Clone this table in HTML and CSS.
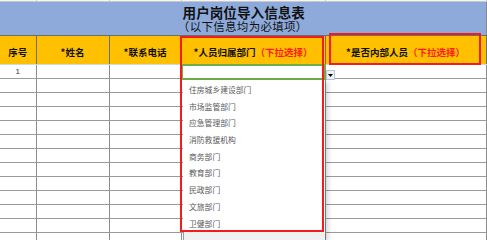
FILE: index.html
```html
<!DOCTYPE html>
<html lang="zh">
<head>
<meta charset="utf-8">
<link rel="stylesheet" href="styles.css">
</head>
<body>
<div class="sheet">
  <table class="grid">
    <colgroup><col class="c1"><col class="c2"><col class="c3"><col class="c4"><col class="c5"></colgroup>
    <tr class="strip"><td></td><td></td><td></td><td></td><td></td></tr>
    <tr class="title"><td colspan="5"><div class="t1">用户岗位导入信息表</div><div class="t2">（以下信息均为必填项）</div></td></tr>
    <tr class="head">
      <th>序号</th>
      <th>*姓名</th>
      <th>*联系电话</th>
      <th>*人员归属部门<span class="hint">（下拉选择）</span></th>
      <th>*是否内部人员<span class="hint">（下拉选择）</span></th>
    </tr>
    <tr class="row first"><td class="num">1</td><td></td><td></td><td></td><td></td></tr>
    <tr class="row"><td></td><td></td><td></td><td></td><td></td></tr>
    <tr class="row"><td></td><td></td><td></td><td></td><td></td></tr>
    <tr class="row"><td></td><td></td><td></td><td></td><td></td></tr>
    <tr class="row"><td></td><td></td><td></td><td></td><td></td></tr>
    <tr class="row"><td></td><td></td><td></td><td></td><td></td></tr>
    <tr class="row"><td></td><td></td><td></td><td></td><td></td></tr>
    <tr class="row"><td></td><td></td><td></td><td></td><td></td></tr>
    <tr class="row"><td></td><td></td><td></td><td></td><td></td></tr>
    <tr class="row"><td></td><td></td><td></td><td></td><td></td></tr>
    <tr class="row"><td></td><td></td><td></td><td></td><td></td></tr>
    <tr class="row"><td></td><td></td><td></td><td></td><td></td></tr>
    <tr class="row"><td></td><td></td><td></td><td></td><td></td></tr>
  </table>

  <div class="selected"></div>
  <div class="drop-btn"><svg width="5" height="3" viewBox="0 0 5 3"><path d="M0 0H5L2.5 3Z" fill="#000"/></svg></div>

  <div class="dropdown">
    <ul class="options">
      <li>住房城乡建设部门</li>
      <li>市场监管部门</li>
      <li>应急管理部门</li>
      <li>消防救援机构</li>
      <li>商务部门</li>
      <li>教育部门</li>
      <li>民政部门</li>
      <li>文旅部门</li>
      <li>卫健部门</li>
    </ul>
    <div class="drop-foot"></div>
  </div>

  <div class="mark mark-dept"></div>
  <div class="mark mark-inner"></div>
</div>
</body>
</html>
```

FILE: styles.css
```css
html, body {
  margin: 0;
  padding: 0;
  background: #ffffff;
}

.sheet {
  position: relative;
  width: 487px;
  height: 240px;
  overflow: hidden;
  font-family: "Noto Sans CJK SC", "Noto Sans", sans-serif;
}

.grid {
  border-collapse: collapse;
  table-layout: fixed;
  width: 486px;
}

.c1 { width: 36px; }
.c2 { width: 73px; }
.c3 { width: 72px; }
.c4 { width: 144px; }
.c5 { width: 161px; }

.grid td, .grid th {
  padding: 0;
  border: 1px solid #8a8a8a;
}

.grid tr > :first-child {
  border-left: none;
}

.strip td {
  height: 1px;
  border-top: none;
  border-color: #c8c8c8;
  background: #f4f4f4;
}

.title td {
  height: 33px;
  background: #8eaadb;
  text-align: center;
  color: #111;
  border-bottom-color: #6d6d6d;
}

.t1 {
  font-size: 13.6px;
  line-height: 14px;
  height: 14px;
  font-weight: bold;
  white-space: nowrap;
  padding-left: 2px;
}

.t2 {
  font-size: 11.5px;
  line-height: 14px;
  height: 14px;
  font-weight: normal;
  white-space: nowrap;
  letter-spacing: 0.3px;
}

.head th {
  height: 24px;
  background: #ffc000;
  color: #111;
  font-size: 9.5px;
  font-weight: bold;
  text-align: center;
  vertical-align: middle;
  padding-top: 4px;
  border-color: #6e6e6e;
  border-bottom-color: #bfe3d0;
  white-space: nowrap;
}

.hint {
  color: #ff1a1a;
}

.row td {
  height: 13px;
  border-color: #8c8c8c;
  border-top-color: #9a9a9a;
  border-bottom-color: #9a9a9a;
}

.num {
  text-align: center;
  font-family: "Liberation Sans", sans-serif;
  font-size: 8px;
  color: #333;
}

.selected {
  position: absolute;
  left: 181px;
  top: 64px;
  width: 141px;
  height: 12px;
  border: 2px solid #6fae4c;
}

.drop-btn {
  position: absolute;
  left: 326px;
  top: 70px;
  width: 7px;
  height: 8px;
  background: #f0f0f0;
  border: 1px solid #b4c6da;
  display: flex;
  align-items: center;
  justify-content: center;
}

.dropdown {
  position: absolute;
  left: 183px;
  top: 80px;
  width: 142px;
  height: 160px;
  display: flex;
  flex-direction: column;
  background: #ffffff;
  box-shadow: 3px 2px 5px rgba(0, 0, 0, 0.18);
}

.options {
  list-style: none;
  margin: 0;
  padding: 2px 0 0 0;
  flex: none;
}

.options li {
  height: 16.7px;
  line-height: 16.7px;
  padding-left: 6px;
  font-size: 7.8px;
  color: #5a5a5a;
  white-space: nowrap;
}

.drop-foot {
  flex: 1;
  background: #f0f0f0;
  border-left: 1px solid #9a9a9a;
}

.mark {
  position: absolute;
  border: 2px solid #f21c1c;
}

.mark-dept {
  left: 180px;
  top: 36px;
  width: 140px;
  height: 192px;
}

.mark-inner {
  left: 329px;
  top: 33px;
  width: 148px;
  height: 28px;
}
```
